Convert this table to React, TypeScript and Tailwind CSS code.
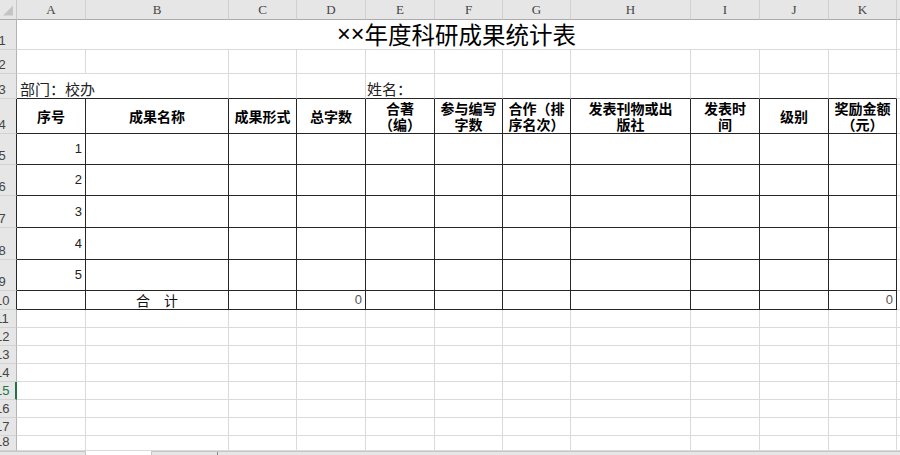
import { ReactNode } from "react"

const cjk = "font-['Noto_Sans_CJK_SC',sans-serif]"

const letters = ["A", "B", "C", "D", "E", "F", "G", "H", "I", "J", "K"]

const heads: string[][] = [
    ["序号"],
    ["成果名称"],
    ["成果形式"],
    ["总字数"],
    ["合著", "（编）"],
    ["参与编写", "字数"],
    ["合作（排", "序名次）"],
    ["发表刊物或出", "版社"],
    ["发表时", "间"],
    ["级别"],
    ["奖励金额", "（元）"],
]

const rowNums = [1, 2, 3, 4, 5, 6, 7, 8, 9, 10, 11, 12, 13, 14, 15, 16, 17, 18]

const RowHead = ({ n }: { n: number }) => {
    const inTable = n >= 4 && n <= 10
    const active = n === 15
    return (
        <div
            className={
                "flex items-end overflow-hidden bg-[#e6e6e6] border-b border-b-[#d2d2d2] font-['Liberation_Sans',sans-serif] text-[13px] leading-none pb-[2px] " +
                (active
                    ? "border-r-2 border-r-[#217346] text-[#217346]"
                    : inTable
                        ? "border-r border-r-[#262626] text-[#444]"
                        : "border-r border-r-[#b4b4b4] text-[#444]")
            }
        >
            <div className="w-[14px] -ml-[5px] shrink-0 text-center">{n}</div>
        </div>
    )
}

const Cell = ({ r, children, className = "" }: { r: number; children?: ReactNode; className?: string }) => {
    const inTable = r >= 4 && r <= 10
    const right = inTable ? "border-r-[#262626]" : "border-r-[#dadada]"
    const bottom = r >= 3 && r <= 10 ? "border-b-[#262626]" : "border-b-[#dadada]"
    return <div className={`border-r border-b ${right} ${bottom} ${className}`}>{children}</div>
}

const Strip = () => <div className="border-b border-b-[#dadada]" />

const renderRow = (r: number) => {
    const cells: ReactNode[] = [<RowHead key={"h" + r} n={r} />]

    if (r === 1) {
        cells.push(
            <div key="t" className={`col-span-11 border-r border-b border-r-[#dadada] border-b-[#dadada] flex items-center justify-center text-[23.5px] text-black ${cjk}`}>
                <span className="font-['Liberation_Sans',sans-serif]">××</span>年度科研成果统计表
            </div>
        )
    } else if (r === 3) {
        cells.push(
            <Cell key="a" r={r} className={`col-span-2 flex items-end pl-[3px] pb-[2px] text-[15px] leading-none text-[#222] ${cjk}`}>
                部门：校办
            </Cell>
        )
        letters.slice(2).forEach((l) =>
            cells.push(
                <Cell key={l} r={r} className={`flex items-end pl-[1px] pb-[2px] text-[15px] leading-none text-[#222] ${cjk}`}>
                    {l === "E" ? "姓名：" : ""}
                </Cell>
            )
        )
    } else if (r === 4) {
        heads.forEach((h, i) =>
            cells.push(
                <Cell key={i} r={r} className={`flex flex-col items-center justify-center text-[14px] leading-[16px] font-bold text-black whitespace-nowrap ${cjk}`}>
                    {h.map((line, j) => (
                        <span key={j}>{line}</span>
                    ))}
                </Cell>
            )
        )
    } else {
        letters.forEach((l) => {
            let content: ReactNode = null
            let cls = ""
            if (r >= 5 && r <= 9 && l === "A") {
                content = r - 4
                cls = "flex items-center justify-end pr-[3px] font-['Liberation_Sans',sans-serif] text-[13px] text-[#222]"
            }
            if (r === 10 && l === "B") {
                content = "合　计"
                cls = `flex items-center justify-center text-[14px] leading-none text-[#111] ${cjk}`
            }
            if (r === 10 && (l === "D" || l === "K")) {
                content = "0"
                cls = "flex items-center justify-end pr-[3px] font-['Liberation_Sans',sans-serif] text-[13px] text-[#555]"
            }
            cells.push(
                <Cell key={l} r={r} className={cls}>
                    {content}
                </Cell>
            )
        })
    }
    cells.push(<Strip key={"s" + r} />)
    return cells
}

const App = () => {
    return (
        <div className="w-[900px] h-[455px] overflow-hidden bg-white flex flex-col">
            <div className="grid grid-cols-[17px_69px_143px_68px_69px_69px_68px_68px_120px_69px_69px_68px_3px] grid-rows-[20px_30px_24px_25px_35px_31px_31px_32px_32px_31px_19px_18px_18px_18px_18px_18px_18px_18px_15px]">
                {/* column header bar */}
                <div className="bg-[#e6e6e6] border-r border-b border-r-[#c8c8c8] border-b-[#ababab] flex items-end justify-end p-[3px]">
                    <svg width="11" height="11" viewBox="0 0 11 11">
                        <polygon points="11,0 11,11 0,11" fill="#c4c4c4" />
                    </svg>
                </div>
                {letters.map((l) => (
                    <div
                        key={l}
                        className="bg-[#e6e6e6] border-r border-b border-r-[#d0d0d0] border-b-[#ababab] flex items-center justify-center font-['Liberation_Serif',serif] text-[13px] text-[#444] pt-[1px]"
                    >
                        {l}
                    </div>
                ))}
                <div className="bg-[#e6e6e6] border-b border-b-[#ababab]" />

                {rowNums.map((r) => renderRow(r))}
            </div>

            <div className="flex h-[4px]">
                <div className="w-[86px] bg-[#e6e6e6] border-t border-r border-[#c6c6c6]" />
                <div className="w-[65px] bg-white" />
                <div className="flex-1 bg-[#e6e6e6] border-t border-l border-[#c6c6c6] flex">
                    <div className="ml-[65px] w-px h-full bg-[#888]" />
                </div>
            </div>
        </div>
    )
}

export default App
